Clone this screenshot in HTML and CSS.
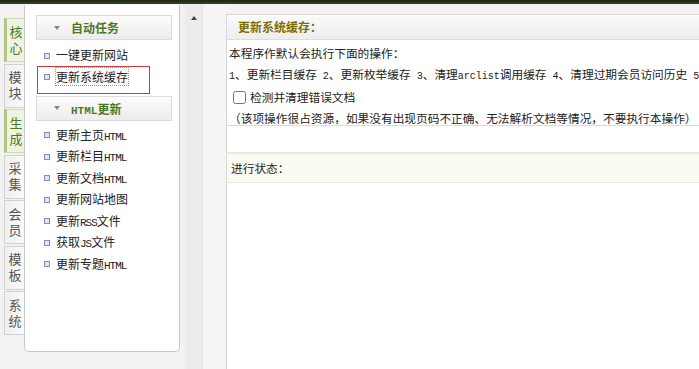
FILE: index.html
```html
<!DOCTYPE html>
<html lang="zh-CN">
<head>
    <meta charset="UTF-8">
    <title>更新系统缓存</title>
    <link rel="stylesheet" href="styles.css">
</head>
<body>
    <div class="topbar"></div>

    <div class="layout">
        <div class="tabs">
            <div class="tab on"><span>核心</span></div>
            <div class="tab"><span>模块</span></div>
            <div class="tab on"><span>生成</span></div>
            <div class="tab"><span>采集</span></div>
            <div class="tab"><span>会员</span></div>
            <div class="tab"><span>模板</span></div>
            <div class="tab"><span>系统</span></div>
        </div>

        <div class="menu">
            <div class="menu-title"><i class="arrow"></i><span>自动任务</span></div>
            <ul class="menu-list first">
                <li>一键更新网站</li>
                <li class="current"><span class="focus">更新系统缓存</span></li>
            </ul>

            <div class="menu-title"><i class="arrow"></i><span><span class="en">HTML</span>更新</span></div>
            <ul class="menu-list">
                <li>更新主页<span class="en">HTML</span></li>
                <li>更新栏目<span class="en">HTML</span></li>
                <li>更新文档<span class="en">HTML</span></li>
                <li>更新网站地图</li>
                <li>更新<span class="en">RSS</span>文件</li>
                <li>获取<span class="en">JS</span>文件</li>
                <li>更新专题<span class="en">HTML</span></li>
            </ul>
        </div>

        <div class="gutter">
            <div class="scroll"><span class="up"></span></div>
            <div class="spacer"></div>
        </div>

        <div class="main">
            <div class="main-title">更新系统缓存：</div>
            <div class="main-body">
                <div>本程序作默认会执行下面的操作：</div>
                <div><span class="en">1</span>、更新栏目缓存<span class="en"> 2</span>、更新枚举缓存<span class="en"> 3</span>、清理<span class="en">arclist</span>调用缓存<span class="en"> 4</span>、清理过期会员访问历史<span class="en"> 5</span>、清理过期的临时文件</div>
                <div><label><input type="checkbox" class="check">检测并清理错误文档</label></div>
                <div>（该项操作很占资源，如果没有出现页码不正确、无法解析文档等情况，不要执行本操作）</div>
            </div>
            <div class="blank"></div>
            <div class="status">进行状态：</div>
        </div>
    </div>
</body>
</html>
```

FILE: styles.css
```css
body {
    margin: 0;
    width: 699px;
    height: 369px;
    overflow: hidden;
    background-color: #f2f2f2;
    font-family: "Noto Sans CJK SC", sans-serif;
    font-size: 12px;
    color: #333;
}

.en {
    font-family: "Liberation Mono", monospace;
    font-size: 11px;
    letter-spacing: -1px;
}

.topbar {
    height: 4px;
    background: linear-gradient(#1c2612, #33402a);
}

.layout {
    display: flex;
    height: 365px;
}

/* left tabs */
.tabs {
    width: 20px;
    margin-left: 4px;
    padding-top: 14px;
    display: flex;
    flex-direction: column;
    gap: 1.5px;
}

.tab {
    height: 44px;
    box-sizing: border-box;
    display: flex;
    justify-content: center;
    align-items: center;
    font-size: 13px;
    color: #555;
    background: linear-gradient(to right, #f0f0f0, #fafafa);
    border: 1px solid #d2d2d2;
    border-right: none;
}

.tab span {
    writing-mode: vertical-rl;
    letter-spacing: 3px;
    line-height: 16px;
    margin-top: 3px;
}

.tab.on {
    color: #4d7a22;
    background: #eef3e2;
    border: 1px solid #cfdcb8;
    border-left: 3px solid #aec784;
    border-right: none;
}

/* menu panel */
.menu {
    width: 156px;
    height: 347px;
    margin-top: 1px;
    box-sizing: border-box;
    padding: 10px 7px 0 11px;
    background-color: white;
    border: 1px solid #c9c9c4;
    border-top: none;
    border-radius: 0 0 5px 5px;
}

.menu-title {
    height: 25px;
    box-sizing: border-box;
    display: flex;
    align-items: center;
    padding-left: 17px;
    border: 1px solid #dcdcdc;
    background: linear-gradient(#fcfcfc, #ececec);
    color: #4d7a22;
    font-weight: bold;
}

.menu-title .en {
    font-size: 11px;
    letter-spacing: 0;
}

.arrow {
    width: 0;
    height: 0;
    margin-right: 11px;
    border-left: 3px solid transparent;
    border-right: 3px solid transparent;
    border-top: 4px solid #888;
}

.menu-list {
    list-style: none;
    margin: 3px 0 0;
    padding: 0;
}

.menu-list.first {
    margin: 4px 0 2px;
}

.menu-list li {
    height: 21.5px;
    line-height: 21.5px;
    padding-left: 8px;
    color: #222;
    white-space: nowrap;
}

.menu-list li::before {
    content: "";
    display: inline-block;
    vertical-align: middle;
    width: 4px;
    height: 4px;
    margin: -2px 6px 0 0;
    border: 1px solid #8190b4;
    background-color: #dfe4f0;
}

.menu-list li.current {
    height: 28px;
    line-height: 20px;
    box-sizing: border-box;
    width: 113px;
    margin-left: 1px;
    padding-left: 6px;
    border: 1px solid #d9363a;
}

.focus {
    outline: 1px dotted #999;
}

/* scroll gutter */
.gutter {
    width: 46px;
    display: flex;
    padding-left: 5px;
    box-sizing: border-box;
}

.scroll {
    width: 17px;
    background-color: #ececec;
    display: flex;
    justify-content: center;
    padding-top: 12px;
    box-sizing: border-box;
}

.up {
    width: 0;
    height: 0;
    border-left: 3px solid transparent;
    border-right: 3px solid transparent;
    border-bottom: 4px solid #444;
}

.spacer {
    flex: 1;
    background-color: #f5f5f5;
    border-left: 1px solid #e4e4e4;
}

/* main content */
.main {
    flex: 1;
    min-width: 0;
    margin-top: 10px;
    overflow: hidden;
    background-color: white;
    border-top: 1px solid #d8d8d8;
    border-left: 1px solid #d8d8d8;
    font-size: 11.7px;
    color: #222;
    white-space: nowrap;
}

.main .en {
    font-size: 10px;
    letter-spacing: 0;
}

.main-title {
    height: 24px;
    line-height: 24px;
    padding-left: 11px;
    border-bottom: 1px solid #dcdcdc;
    background: linear-gradient(#fbfbfb, #ededed);
    color: #7d6e00;
    font-size: 12px;
    font-weight: bold;
}

.main-body {
    padding: 3px 2px 0;
    height: 82px;
    line-height: 20.5px;
    border-bottom: 1px solid #dcdcdc;
}

.main-body label {
    display: flex;
    align-items: center;
}

.check {
    width: 13px;
    height: 13px;
    margin: 0 4px 0 4px;
}

.blank {
    height: 26px;
}

.status {
    height: 28px;
    line-height: 28px;
    padding-left: 4px;
    border-top: 2px solid #e8e8e2;
    border-bottom: 1px solid #e8e8e2;
    background-color: #fbfbf2;
}
```
